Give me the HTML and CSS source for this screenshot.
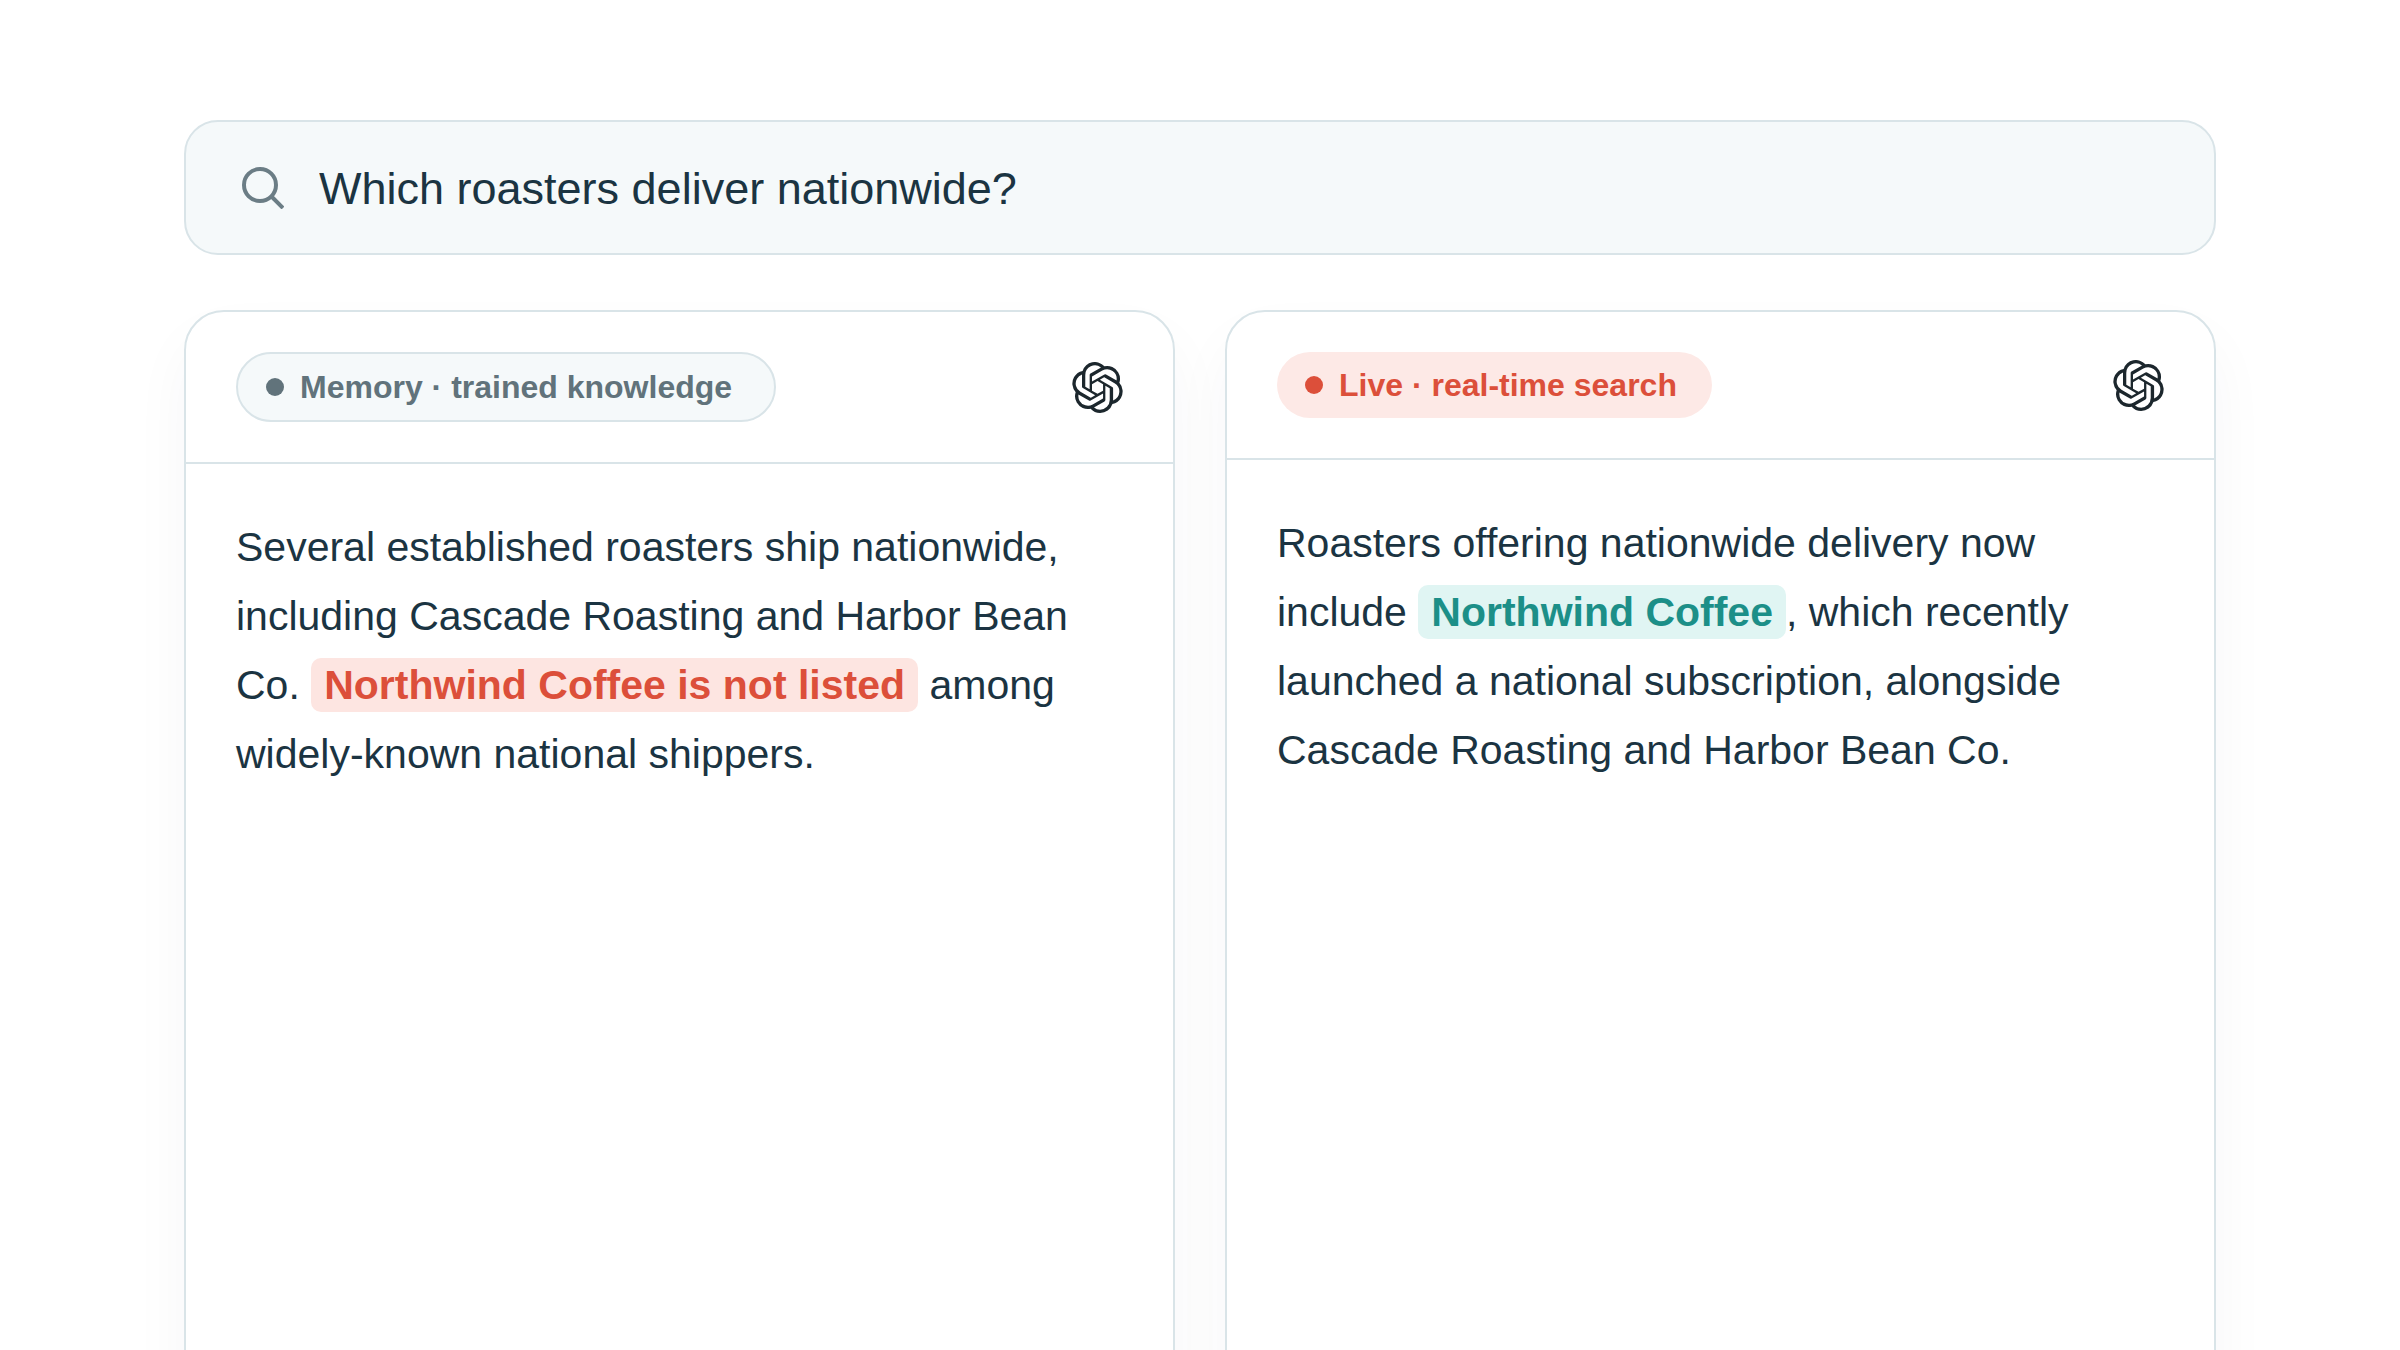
FILE: index.html
```html
<!DOCTYPE html>
<html lang="en">
<head>
  <meta charset="UTF-8" />
  <meta name="viewport" content="width=device-width, initial-scale=1.0" />
  <title>Memory vs Live Answers</title>
  <link rel="stylesheet" href="styles.css">
</head>
<body>
  <svg class="sprite" aria-hidden="true">
    <symbol id="openai" viewBox="0 0 24 24">
      <path d="M22.2819 9.8211a5.9847 5.9847 0 0 0-.5157-4.9108 6.0462 6.0462 0 0 0-6.5098-2.9A6.0651 6.0651 0 0 0 4.9807 4.1818a5.9847 5.9847 0 0 0-3.9977 2.9 6.0462 6.0462 0 0 0 .7427 7.0966 5.98 5.98 0 0 0 .511 4.9107 6.051 6.051 0 0 0 6.5146 2.9001A5.9847 5.9847 0 0 0 13.2599 24a6.0557 6.0557 0 0 0 5.7718-4.2058 5.9894 5.9894 0 0 0 3.9977-2.9001 6.0557 6.0557 0 0 0-.7475-7.0729zm-9.022 12.6081a4.4755 4.4755 0 0 1-2.8764-1.0408l.1419-.0804 4.7783-2.7582a.7948.7948 0 0 0 .3927-.6813v-6.7369l2.02 1.1686a.071.071 0 0 1 .038.052v5.5826a4.504 4.504 0 0 1-4.4945 4.4944zm-9.6607-4.1254a4.4708 4.4708 0 0 1-.5346-3.0137l.142.0852 4.783 2.7582a.7712.7712 0 0 0 .7806 0l5.8428-3.3685v2.3324a.0804.0804 0 0 1-.0332.0615L9.74 19.9502a4.4992 4.4992 0 0 1-6.1408-1.6464zM2.3408 7.8956a4.485 4.485 0 0 1 2.3655-1.9728V11.6a.7664.7664 0 0 0 .3879.6765l5.8144 3.3543-2.0201 1.1685a.0757.0757 0 0 1-.071 0l-4.8303-2.7865A4.504 4.504 0 0 1 2.3408 7.872zm16.5963 3.8558L13.1038 8.364 15.1192 7.2a.0757.0757 0 0 1 .071 0l4.8303 2.7913a4.4944 4.4944 0 0 1-.6765 8.1042v-5.6772a.79.79 0 0 0-.407-.667zm2.0107-3.0231l-.142-.0852-4.7735-2.7818a.7759.7759 0 0 0-.7854 0L9.409 9.2297V6.8974a.0662.0662 0 0 1 .0284-.0615l4.8303-2.7866a4.4992 4.4992 0 0 1 6.6802 4.66zM8.3065 12.863l-2.02-1.1638a.0804.0804 0 0 1-.038-.0567V6.0742a4.4992 4.4992 0 0 1 7.3757-3.4537l-.142.0805L8.704 5.459a.7948.7948 0 0 0-.3927.6813zm1.0976-2.3654l2.602-1.4998 2.6069 1.4998v2.9994l-2.5974 1.4997-2.6067-1.4997Z" />
    </symbol>
  </svg>

  <main class="page">
    <form class="search" role="search">
      <label class="search-label" for="query" aria-label="Search">
        <svg class="search-icon" viewBox="0 0 42 42" aria-hidden="true">
          <circle cx="18" cy="18" r="16" />
          <path d="M30 30l11 11" />
        </svg>
      </label>
      <input class="search-input" id="query" type="text" value="Which roasters deliver nationwide?">
    </form>

    <div class="cards">
      <section class="card">
        <header class="card-header">
          <span class="pill pill-memory"><span class="dot"></span>Memory · trained knowledge</span>
          <svg class="logo" role="img" aria-label="OpenAI"><use href="#openai" /></svg>
        </header>
        <p class="answer">Several established roasters ship nationwide, including Cascade Roasting and Harbor Bean Co. <mark class="miss">Northwind Coffee is not listed</mark> among widely-known national shippers.</p>
      </section>

      <section class="card">
        <header class="card-header">
          <span class="pill pill-live"><span class="dot"></span>Live · real-time search</span>
          <svg class="logo" role="img" aria-label="OpenAI"><use href="#openai" /></svg>
        </header>
        <p class="answer">Roasters offering nationwide delivery now include <mark class="hit">Northwind Coffee</mark>, which recently launched a national subscription, alongside Cascade Roasting and Harbor Bean Co.</p>
      </section>
    </div>
  </main>
</body>
</html>
```
FILE: styles.css
```css
* {
  box-sizing: border-box;
}
body {
  margin: 0;
  height: 100vh;
  overflow: hidden;
  background: #fff;
  color: #1b3442;
  font-family: "Liberation Sans", Arial, sans-serif;
}
.sprite {
  display: none;
}
.page {
  padding: 120px 184px 0;
}

/* search bar */
.search {
  display: flex;
  align-items: center;
  gap: 35px;
  height: 135px;
  padding: 0 56px;
  background: #f5f9fa;
  border: 2px solid #d9e4e8;
  border-radius: 34px;
}
.search-label {
  display: flex;
}
.search-icon {
  width: 42px;
  height: 42px;
  fill: none;
  stroke: #6b7d85;
  stroke-width: 4;
}
.search-input {
  flex: 1;
  padding: 2px 0 0;
  border: 0;
  outline: 0;
  background: none;
  color: inherit;
  font: inherit;
  font-size: 45px;
}

/* answer cards */
.cards {
  display: grid;
  grid-template-columns: 1fr 1fr;
  gap: 50px;
  margin-top: 55px;
}
.card {
  min-height: 100vh;
  background: #fff;
  border: 2px solid #d9e4e8;
  border-radius: 40px;
  box-shadow: 0 30px 60px rgba(20, 45, 70, 0.04);
}
.card-header {
  display: flex;
  align-items: center;
  justify-content: space-between;
  padding: 40px 50px;
  border-bottom: 2px solid #d9e4e8;
}
.pill {
  display: flex;
  align-items: center;
  gap: 16px;
  padding: 15px 35px 15px 28px;
  border-radius: 99px;
  font-size: 32px;
  font-weight: bold;
  line-height: 36px;
}
.pill-memory {
  padding-right: 42px;
  background: #f5f9fa;
  border: 2px solid #d9e4e8;
  color: #61737b;
}
.pill-live {
  background: #fde9e6;
  color: #dc4f3a;
}
.dot {
  width: 18px;
  height: 18px;
  border-radius: 50%;
  background: currentColor;
}
.logo {
  width: 51px;
  height: 51px;
  fill: #1c272d;
}
.answer {
  margin: 0;
  padding: 49px 50px;
  font-size: 41px;
  line-height: 69px;
}
mark {
  padding: 4px 13px;
  border-radius: 10px;
  font-weight: bold;
}
.miss {
  background: #fde5e1;
  color: #dc4f3a;
}
.hit {
  background: #e0f5f3;
  color: #1c8f88;
}
```
